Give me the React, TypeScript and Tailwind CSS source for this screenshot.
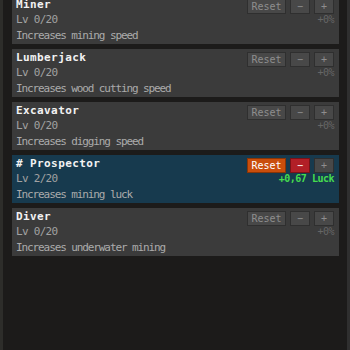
const skills = [
  { name: "Miner", lv: "Lv 0/20", desc: "Increases mining speed", active: false, bonus: "+0%" },
  { name: "Lumberjack", lv: "Lv 0/20", desc: "Increases wood cutting speed", active: false, bonus: "+0%" },
  { name: "Excavator", lv: "Lv 0/20", desc: "Increases digging speed", active: false, bonus: "+0%" },
  { name: "# Prospector", lv: "Lv 2/20", desc: "Increases mining luck", active: true, bonus: "+0,67 Luck" },
  { name: "Diver", lv: "Lv 0/20", desc: "Increases underwater mining", active: false, bonus: "+0%" },
];

const font = { fontFamily: '"DejaVu Sans Mono", "Liberation Mono", monospace' };

const SkillCard = ({ s }: { s: (typeof skills)[number] }) => (
  <div
    className={`flex justify-between h-[48px] pl-[4px] pr-[5px] ${
      s.active ? "bg-[#173a4e]" : "bg-[#3b3b3b]"
    }`}
  >
    <div className="flex flex-col pt-[3px]">
      <div className="h-[11px] text-[11px] leading-[11px] font-bold tracking-[0.4px] text-[#f2f2f2]">
        {s.name}
      </div>
      <div className="mt-[4px] h-[12px] text-[11px] leading-[12px] tracking-[-0.7px] text-[#a2a2a2]">
        {s.lv}
      </div>
      <div className="mt-[4px] h-[12px] text-[11px] leading-[12px] tracking-[-1.1px] text-[#ababab]">
        {s.desc}
      </div>
    </div>
    <div className="flex flex-col items-end pt-[3px]">
      <div className="flex gap-[4px]">
        <button
          className={`w-[39px] h-[15px] text-[10px] leading-[13px] border ${
            s.active
              ? "bg-[#c94e0c] border-[#8a3506] text-white"
              : "bg-[#484848] border-[#2f2f2f] text-[#8e8e8e]"
          }`}
        >
          Reset
        </button>
        <button
          className={`w-[20px] h-[15px] text-[10px] leading-[13px] border ${
            s.active
              ? "bg-[#b21f27] border-[#7a1217] text-white"
              : "bg-[#484848] border-[#2f2f2f] text-[#8e8e8e]"
          }`}
        >
          −
        </button>
        <button className="w-[20px] h-[15px] text-[10px] leading-[13px] border bg-[#484848] border-[#2f2f2f] text-[#8e8e8e]">
          +
        </button>
      </div>
      <div
        className={`text-[10px] leading-[11px] tracking-[-0.5px] ${
          s.active ? "text-[#45dc4e] font-bold" : "text-[#666666]"
        }`}
      >
        {s.bonus}
      </div>
    </div>
  </div>
);

export default function App() {
  return (
    <div style={font} className="w-[350px] h-[350px] overflow-hidden bg-[#1c1b1a] flex">
      <div className="w-[3px] bg-[#2d2d2a]" />
      <div className="flex-1 pl-[9px] pr-[8px]">
        <div className="flex flex-col gap-[5px] mt-[-4px]">
          {skills.map((s) => (
            <SkillCard key={s.name} s={s} />
          ))}
        </div>
      </div>
      <div className="w-[3px] bg-[#2f2f2f]" />
    </div>
  );
}
